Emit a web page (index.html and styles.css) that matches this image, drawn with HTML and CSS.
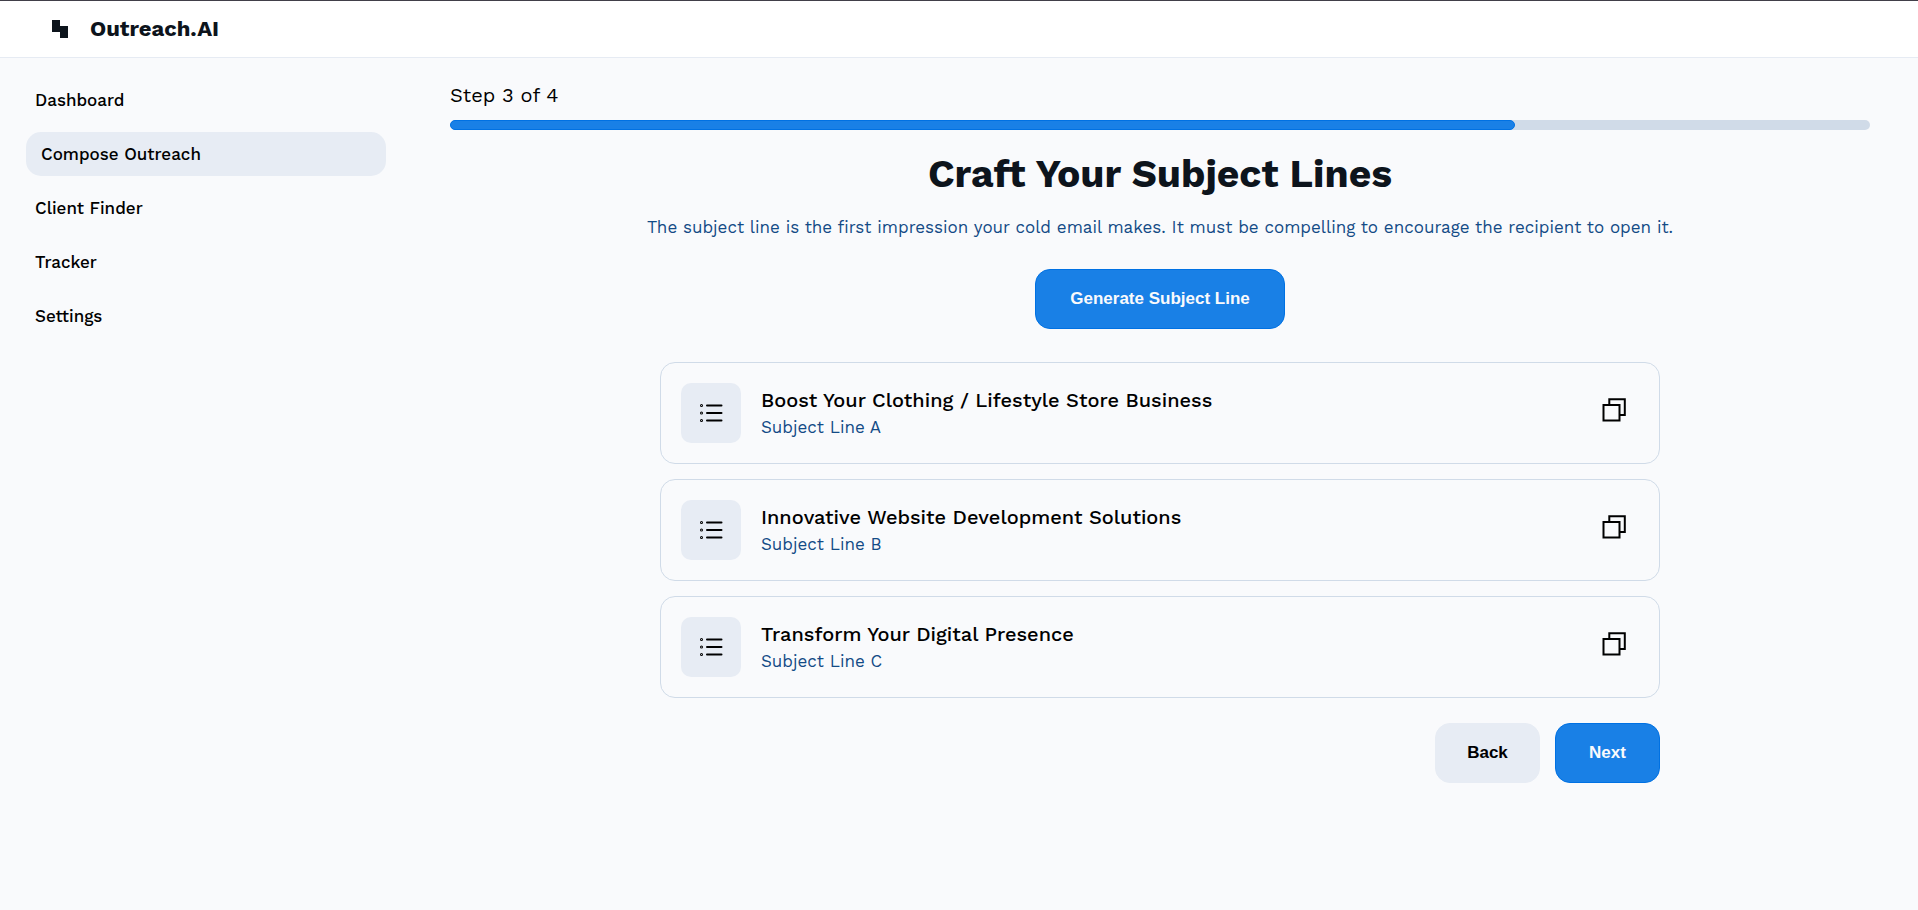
FILE: index.html
```html
<!DOCTYPE html>
<html lang="en">
<head>
<meta charset="utf-8">
<title>Outreach.AI</title>
<link rel="stylesheet" href="styles.css">
</head>
<body>
<header class="topbar">
  <svg class="logo" viewBox="0 0 16 18" aria-hidden="true"><path d="M0 0h8v6h8v12H8v-6H0z"/></svg>
  <span class="brand">Outreach.AI</span>
</header>
<div class="layout">
  <nav class="sidebar">
    <a class="nav-link" href="#">Dashboard</a>
    <a class="nav-link nav-link-active" href="#" aria-current="page">Compose Outreach</a>
    <a class="nav-link" href="#">Client Finder</a>
    <a class="nav-link" href="#">Tracker</a>
    <a class="nav-link" href="#">Settings</a>
  </nav>
  <main class="main">
    <p class="step">Step 3 of 4</p>
    <div class="progress" role="progressbar" aria-label="Step 3 of 4" aria-valuenow="75" aria-valuemin="0" aria-valuemax="100"><div class="progress-fill" style="width: 75%"></div></div>
    <h1 class="title">Craft Your Subject Lines</h1>
    <p class="intro">The subject line is the first impression your cold email makes. It must be compelling to encourage the recipient to open it.</p>
    <button class="btn btn-primary btn-generate" type="button">Generate Subject Line</button>
    <section class="results">
      <article class="card">
        <div class="card-icon"><svg class="list-icon" viewBox="0 0 24 20" aria-hidden="true"><path d="M8 2.5h14.5M8 10h14.5M8 17.5h14.5"/><circle cx="2.5" cy="2.5" r=".5"/><circle cx="2.5" cy="10" r=".5"/><circle cx="2.5" cy="17.5" r=".5"/></svg></div>
        <div class="card-text"><h2 class="card-title">Boost Your Clothing / Lifestyle Store Business</h2><p class="card-sub">Subject Line A</p></div>
        <button class="copy" type="button" aria-label="Copy subject line A"><svg class="copy-icon" viewBox="0 0 24 24" aria-hidden="true"><path d="M1.5 7h16v15.5h-16zM7.3 7V1.3h15.5v15.8h-5.3"/></svg></button>
      </article>
      <article class="card">
        <div class="card-icon"><svg class="list-icon" viewBox="0 0 24 20" aria-hidden="true"><path d="M8 2.5h14.5M8 10h14.5M8 17.5h14.5"/><circle cx="2.5" cy="2.5" r=".5"/><circle cx="2.5" cy="10" r=".5"/><circle cx="2.5" cy="17.5" r=".5"/></svg></div>
        <div class="card-text"><h2 class="card-title">Innovative Website Development Solutions</h2><p class="card-sub">Subject Line B</p></div>
        <button class="copy" type="button" aria-label="Copy subject line B"><svg class="copy-icon" viewBox="0 0 24 24" aria-hidden="true"><path d="M1.5 7h16v15.5h-16zM7.3 7V1.3h15.5v15.8h-5.3"/></svg></button>
      </article>
      <article class="card">
        <div class="card-icon"><svg class="list-icon" viewBox="0 0 24 20" aria-hidden="true"><path d="M8 2.5h14.5M8 10h14.5M8 17.5h14.5"/><circle cx="2.5" cy="2.5" r=".5"/><circle cx="2.5" cy="10" r=".5"/><circle cx="2.5" cy="17.5" r=".5"/></svg></div>
        <div class="card-text"><h2 class="card-title">Transform Your Digital Presence</h2><p class="card-sub">Subject Line C</p></div>
        <button class="copy" type="button" aria-label="Copy subject line C"><svg class="copy-icon" viewBox="0 0 24 24" aria-hidden="true"><path d="M1.5 7h16v15.5h-16zM7.3 7V1.3h15.5v15.8h-5.3"/></svg></button>
      </article>
    </section>
    <div class="actions">
      <button class="btn btn-secondary" type="button">Back</button>
      <button class="btn btn-primary" type="button">Next</button>
    </div>
  </main>
</div>
</body>
</html>
```
FILE: styles.css
```css
* { box-sizing: border-box; }
body {
  margin: 0;
  background: #f9fafc;
  color: #000;
  font-family: "Work Sans", "Noto Sans", sans-serif;
}
h1, h2, p { margin: 0; }
.topbar {
  display: flex;
  align-items: center;
  gap: 22px;
  height: 58px;
  padding: 0 52px;
  background: #fff;
  border-top: 1px solid #413f49;
  border-bottom: 1px solid #e6ebf3;
}
.logo { width: 16px; height: 18px; fill: #0d141c; }
.brand { font-size: 22px; line-height: 28px; font-weight: 700; color: #0d141c; }
.layout { display: flex; }
.sidebar {
  flex: 0 0 386px;
  display: flex;
  flex-direction: column;
  gap: 10px;
  padding: 20px 0 0 26px;
}
.nav-link {
  padding: 10px 9px;
  font-size: 17px;
  line-height: 24px;
  font-weight: 500;
  color: #000;
  text-decoration: none;
}
.nav-link-active { padding: 10px 15px; border-radius: 15px; background: #e7ecf4; }
.main {
  flex: 1;
  min-width: 0;
  display: flex;
  flex-direction: column;
  align-items: center;
  padding: 24px 48px 48px 64px;
}
.step { align-self: stretch; font-size: 20px; line-height: 26px; }
.progress {
  align-self: stretch;
  height: 10px;
  margin-top: 12px;
  border-radius: 5px;
  background: #d0dbe8;
}
.progress-fill {
  height: 100%;
  border: 1px solid #0071e3;
  border-radius: 5px;
  background: #1980e6;
}
.title { margin-top: 20px; font-size: 39px; line-height: 48px; font-weight: 700; color: #0d141c; text-align: center; }
.intro { margin-top: 16px; font-size: 17px; line-height: 26px; color: #134b86; text-align: center; }
.btn {
  min-width: 105px;
  height: 60px;
  border: 1px solid #e7ecf4;
  border-radius: 15px;
  font: 700 17px/20px "Liberation Sans", Arial, sans-serif;
}
.btn-primary { background: #1980e6; border-color: #0071e3; color: #f9fafc; }
.btn-secondary { background: #e7ecf4; color: #000; }
.btn-generate { min-width: 250px; margin-top: 29px; }
.results {
  display: flex;
  flex-direction: column;
  gap: 15px;
  width: 100%;
  max-width: 1000px;
  margin-top: 33px;
}
.card {
  display: flex;
  align-items: center;
  gap: 20px;
  padding: 20px;
  border: 1px solid #d0dbe8;
  border-radius: 15px;
}
.card-icon {
  display: grid;
  place-items: center;
  width: 60px;
  height: 60px;
  border-radius: 10px;
  background: #e7ecf4;
}
.list-icon { width: 24px; height: 20px; fill: none; stroke: #000; stroke-width: 2; stroke-linecap: round; }
.card-text { flex: 1; }
.card-title { font-size: 20px; line-height: 28px; font-weight: 500; }
.card-sub { font-size: 17px; line-height: 26px; color: #134b86; }
.copy { padding: 7px 13px 13px; border: 0; background: none; }
.copy-icon { display: block; width: 24px; height: 24px; fill: none; stroke: #000; stroke-width: 2; }
.actions {
  display: flex;
  justify-content: flex-end;
  gap: 15px;
  width: 100%;
  max-width: 1000px;
  margin-top: 25px;
}
```
